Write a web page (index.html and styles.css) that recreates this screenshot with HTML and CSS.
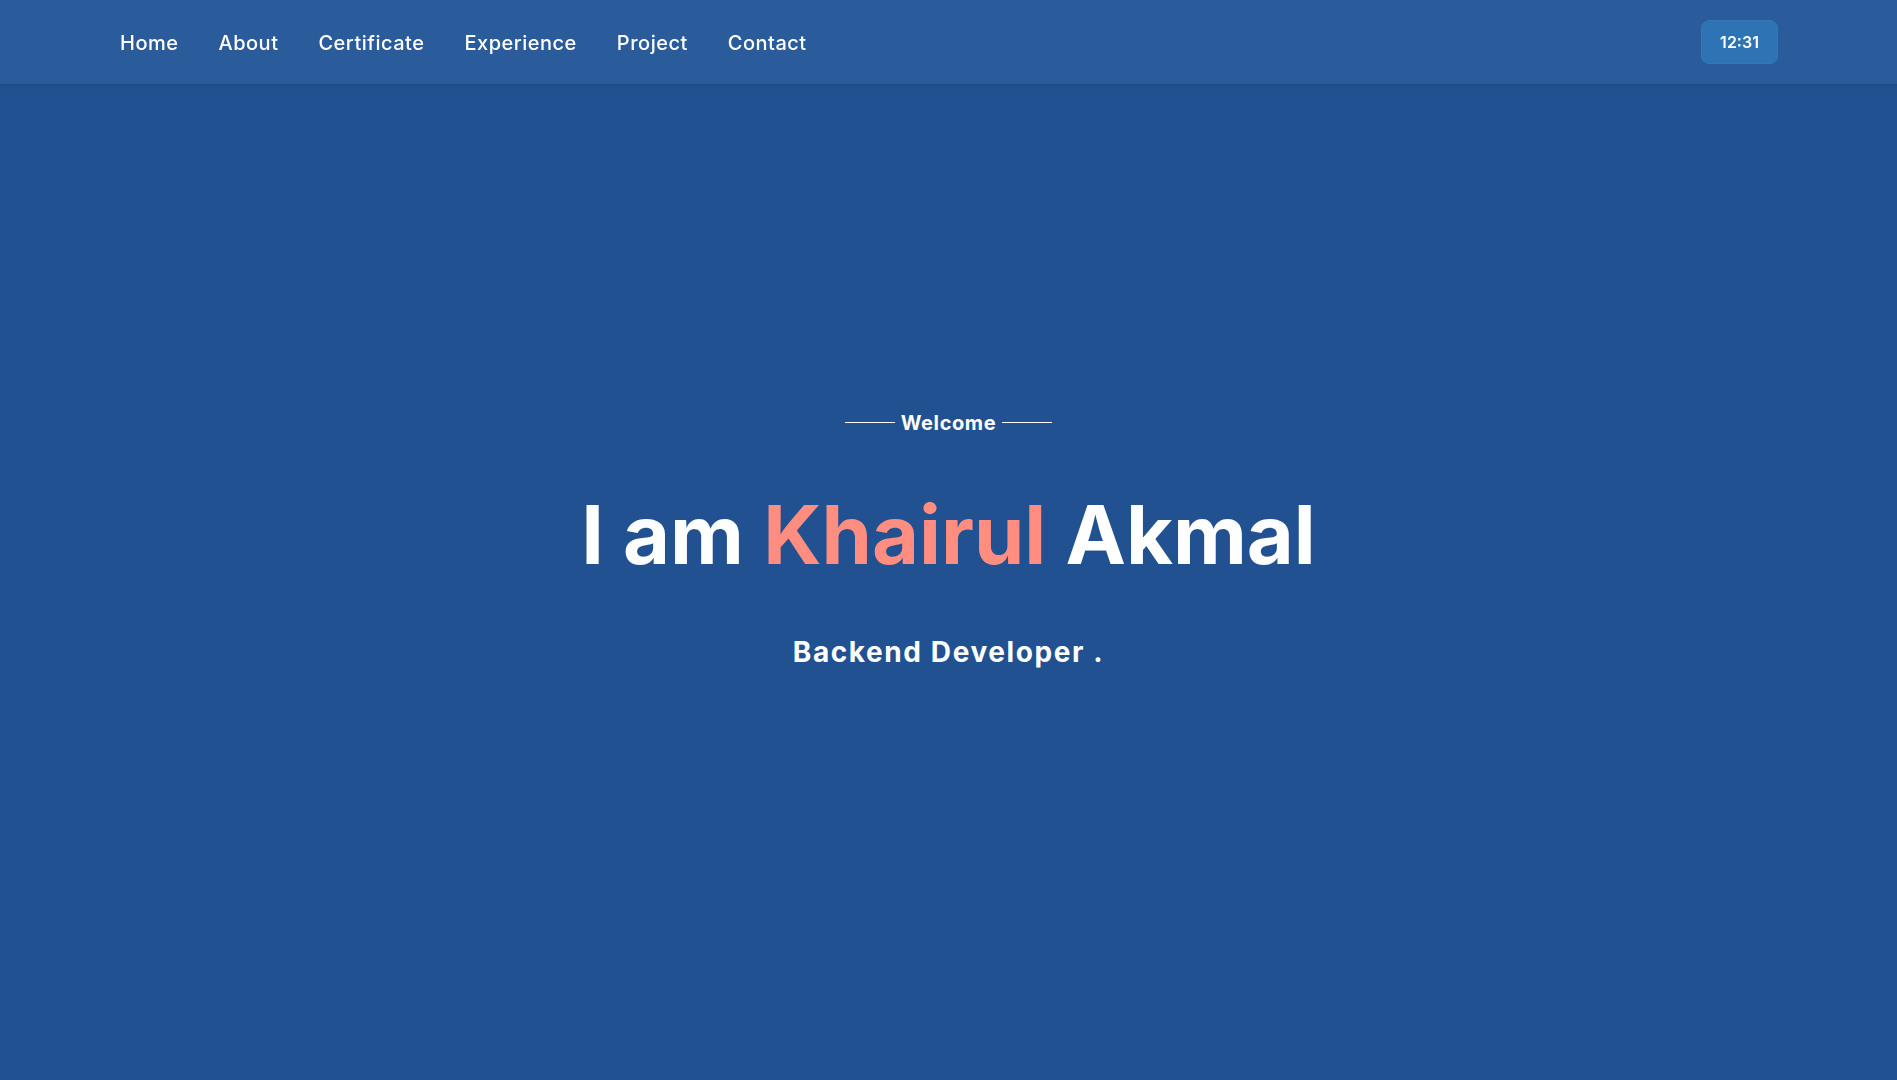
FILE: index.html
```html
<!DOCTYPE html>
<html lang="en">
<head>
<meta charset="utf-8">
<title>Khairul Akmal</title>
<link rel="stylesheet" href="styles.css">
</head>
<body>
<header class="topbar">
  <nav class="nav">
    <a class="nav-link" href="#home">Home</a>
    <a class="nav-link" href="#about">About</a>
    <a class="nav-link" href="#certificate">Certificate</a>
    <a class="nav-link" href="#experience">Experience</a>
    <a class="nav-link" href="#project">Project</a>
    <a class="nav-link" href="#contact">Contact</a>
  </nav>
  <div class="clock">12:31</div>
</header>
<main class="hero">
  <div class="welcome">
    <span class="rule"></span>
    <span class="welcome-text">Welcome</span>
    <span class="rule"></span>
  </div>
  <h1 class="title">I am <span class="accent">Khairul</span> Akmal</h1>
  <p class="role">Backend Developer .</p>
</main>
</body>
</html>
```
FILE: styles.css
```css
* { box-sizing: border-box; }
html, body { margin: 0; padding: 0; }
body {
  background: #215190;
  color: #ffffff;
  font-family: Inter, "Noto Sans", "Liberation Sans", sans-serif;
  min-height: 100vh;
}
.topbar {
  position: fixed;
  top: 0;
  left: 0;
  right: 0;
  height: 85px;
  background: #2a5b9b;
  border-bottom: 1px solid #1f4d8a;
  box-shadow: 0 1px 2px rgba(0,0,0,0.08);
  display: flex;
  align-items: center;
  justify-content: space-between;
  padding: 0 119px 0 120px;
  z-index: 10;
}
.nav {
  display: flex;
  gap: 40px;
  align-items: center;
  padding-top: 2px;
}
.nav-link {
  color: #ffffff;
  text-decoration: none;
  font-size: 20px;
  font-weight: 500;
  letter-spacing: 0.5px;
  line-height: 1;
}
.clock {
  width: 77px;
  height: 44px;
  margin-top: -1px;
  background: #2e73b4;
  border: 1px solid #3577b5;
  border-radius: 8px;
  display: flex;
  align-items: center;
  justify-content: center;
  font-size: 16px;
  font-weight: 600;
}
.hero {
  height: 100vh;
  display: flex;
  flex-direction: column;
  align-items: center;
  justify-content: center;
}
.welcome {
  display: flex;
  align-items: center;
  gap: 6px;
}
.rule {
  width: 50px;
  height: 1px;
  background: #ffffff;
}
.welcome-text {
  font-size: 20px;
  font-weight: 700;
  letter-spacing: 0.6px;
}
.title {
  margin: 52px 0 0;
  font-size: 81px;
  font-weight: 700;
  line-height: 1.2;
  letter-spacing: 0;
}
.accent { color: #ff8e80; }
.role {
  margin: 51px 0 0;
  font-size: 28px;
  font-weight: 700;
  letter-spacing: 1.6px;
}
```
